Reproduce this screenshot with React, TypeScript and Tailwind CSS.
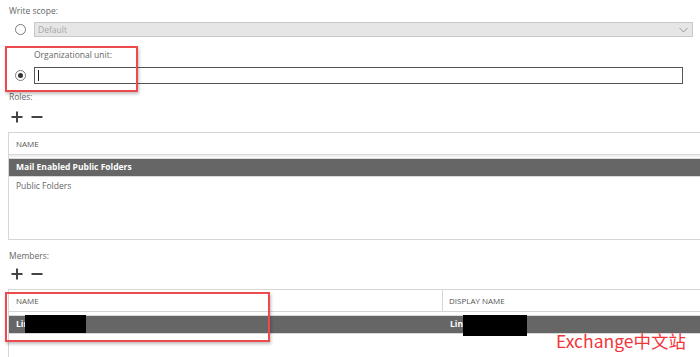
import React from 'react';

function Radio({ checked }: { checked?: boolean }) {
  return (
    <div className="flex h-[11px] w-[11px] items-center justify-center rounded-full border border-[#7a7a7a] bg-white">
      {checked && <div className="h-[5px] w-[5px] rounded-full bg-[#333]" />}
    </div>
  );
}

function PlusMinus() {
  return (
    <div className="flex items-center gap-[8px] pl-[11px]">
      <svg width="12" height="12" viewBox="0 0 12 12">
        <path d="M6 0.5v11M0.5 6h11" stroke="#444" strokeWidth="2" />
      </svg>
      <svg width="12" height="12" viewBox="0 0 12 12">
        <path d="M0.5 6h11" stroke="#444" strokeWidth="2" />
      </svg>
    </div>
  );
}

export default function App() {
  return (
    <div className="relative h-[357px] w-[700px] overflow-hidden bg-white text-[#555] [font-family:'Open_Sans','Noto_Sans',sans-serif]">
      <div className="pl-[9px] pt-[5px] text-[8.5px] leading-[12px] text-[#666]">Write scope:</div>

      <div className="mt-[5px] flex items-center pl-[15px]">
        <Radio />
        <div className="ml-[8px] flex h-[15px] w-[659px] items-center justify-between border border-[#c8c8c8] bg-[#e6e6e6] pl-[3px] pr-[4px]">
          <span className="text-[8.5px] leading-[12px] text-[#a6a6a6]">Default</span>
          <svg width="9" height="6" viewBox="0 0 9 6">
            <path d="M0.5 1l4 4 4-4" stroke="#999" fill="none" strokeWidth="1" />
          </svg>
        </div>
      </div>

      <div className="mt-[12px] pl-[34px] text-[8.5px] leading-[12px] text-[#666]">Organizational unit:</div>
      <div className="mt-[6px] flex items-center pl-[15px]">
        <Radio checked />
        <div className="ml-[8px] flex h-[17px] w-[649px] items-center border border-[#555] bg-white pl-[3px]">
          <div className="h-[11px] w-px bg-[#222]" />
        </div>
      </div>

      <div className="mt-[7px] pl-[9px] text-[8.5px] leading-[12px] text-[#666]">Roles:</div>
      <div className="mt-[8px]">
        <PlusMinus />
      </div>

      <div className="ml-[8px] mt-[9px] h-[108px] w-[720px] border border-[#d6d6d6]">
        <div className="flex h-[22px] items-center border-b border-[#d6d6d6] pl-[7px] text-[8px] uppercase text-[#555]">Name</div>
        <div className="h-[2px] bg-[#eef1f4]" />
        <div className="mt-px flex h-[19px] items-center border-y border-[#d9d9d9] bg-[#666666] pl-[7px] text-[8.5px] font-bold text-white">
          Mail Enabled Public Folders
        </div>
        <div className="flex h-[19px] items-center pl-[7px] text-[8.5px] text-[#666]">Public Folders</div>
      </div>

      <div className="mt-[10px] pl-[9px] text-[8.5px] leading-[12px] text-[#666]">Members:</div>
      <div className="mt-[6px]">
        <PlusMinus />
      </div>

      <div className="ml-[8px] mt-[9px] h-[80px] w-[720px] border border-[#d6d6d6]">
        <div className="flex h-[22px] border-b border-[#d6d6d6] text-[8px] uppercase text-[#555]">
          <div className="flex w-[434px] items-center border-r border-[#d6d6d6] pl-[7px]">Name</div>
          <div className="flex items-center pl-[6px]">Display Name</div>
        </div>
        <div className="mt-[3px] flex h-[19px] items-center border-y border-[#d9d9d9] bg-[#666666] text-[8.5px] font-bold text-white">
          <div className="relative w-[435px] pl-[7px]">
            Lin
            <div className="absolute left-[16px] top-[-3px] h-[18px] w-[61px] bg-black" />
          </div>
          <div className="relative pl-[6px]">
            Lin
            <div className="absolute left-[19px] top-[-3px] h-[21px] w-[64px] bg-black" />
          </div>
        </div>
      </div>

      <div className="absolute left-[5px] top-[46px] h-[46px] w-[133px] border-2 border-[#ec4a4d] shadow-[1px_2px_3px_rgba(0,0,0,0.25)]" />
      <div className="absolute left-[5px] top-[292px] h-[50px] w-[265px] border-2 border-[#ec4a4d] shadow-[1px_2px_3px_rgba(0,0,0,0.25)]" />

      <div className="absolute left-[556px] top-[329px] text-[17.5px] leading-[24px] text-[#f2353b] [font-family:'Noto_Sans_CJK_SC',sans-serif]">
        Exchange中文站
      </div>
    </div>
  );
}
